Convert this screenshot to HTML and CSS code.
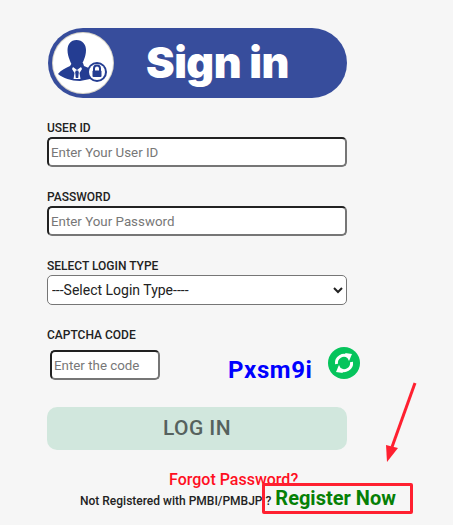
FILE: index.html
```html
<!DOCTYPE html>
<html lang="en">
<head>
<meta charset="utf-8">
<title>Sign in</title>
<link rel="stylesheet" href="styles.css">
</head>
<body>
<main class="page">
  <div class="banner">
    <div class="avatar">
      <svg viewBox="0 0 60 60" width="60" height="60" aria-hidden="true">
        <path class="navy" d="M5 41C8 37 13 35 17 33L19 30L30 30L31 33L38 36L37 46L27 48C18 48 10 45 5 41Z"/>
        <path class="navy" d="M23.500 7C17.500 7 14.500 11.500 14.500 17C14.500 21 15.500 24 16.500 26.500C17.500 30 20 34 23.500 34C27 34 30 30 31 26.500C32 24 33 21 33 17C33 11.500 29.500 7 23.500 7Z"/>
        <path class="white" d="M20 34L24 37L28 34L29 36L26.500 40L27.500 46L20.500 46L21.500 40L19 36Z"/>
        <path class="navy" d="M22.800 37.500H25.200L25.800 39.500L25.200 45H22.800L22.200 39.500Z"/>
        <circle class="navy" cx="44" cy="39" r="10"/>
        <circle class="white" cx="44" cy="39" r="8"/>
        <path class="lock" d="M41 38V35.500A3 3 0 0 1 47 35.500V38"/>
        <rect class="navy" x="39.500" y="37.500" width="9" height="6.500" rx="1"/>
      </svg>
    </div>
    <span class="banner-title">Sign in</span>
  </div>

  <form class="form">
    <div class="field">
      <label class="label" for="uid">USER ID</label>
      <input class="input" id="uid" type="text" placeholder="Enter Your User ID">
    </div>
    <div class="field">
      <label class="label" for="pwd">PASSWORD</label>
      <input class="input" id="pwd" type="password" placeholder="Enter Your Password">
    </div>
    <div class="field">
      <label class="label" for="type">SELECT LOGIN TYPE</label>
      <select class="select" id="type"><option>---Select Login Type----</option></select>
    </div>
    <div class="field">
      <label class="label" for="cap">CAPTCHA CODE</label>
      <div class="captcha-row">
        <input class="input captcha-input" id="cap" type="text" placeholder="Enter the code">
        <span class="captcha-code">Pxsm9i</span>
        <span class="refresh">
          <svg viewBox="0 0 32 32" width="32" height="32" aria-hidden="true">
            <circle cx="16" cy="16" r="16" fill="#06c45c"/>
            <path class="arc" d="M8.500 17a7.500 7.500 0 0 1 12-7"/>
            <path class="tip" d="M17 6l7 1-3 7z"/>
            <path class="arc" d="M23.500 15a7.500 7.500 0 0 1-12 7"/>
            <path class="tip" d="M15 26l-7-1 3-7z"/>
          </svg>
        </span>
      </div>
    </div>
    <button class="login" type="button">LOG IN</button>
    <a class="forgot" href="#">Forgot Password?</a>
    <p class="register">Not Registered with PMBI/PMBJP ? <a class="register-link" href="#">Register Now</a></p>
  </form>

  <span class="red-box"></span>
  <svg class="arrow" viewBox="0 0 40 90" width="40" height="90" aria-hidden="true">
    <path d="M31 3L8 67" stroke="#ff2030" stroke-width="3" fill="none"/>
    <path d="M3 82L2 65L14 68Z" fill="#ff2030"/>
  </svg>
</main>
</body>
</html>
```
FILE: styles.css
```css
* { box-sizing: border-box; }
html, body { margin: 0; height: 100%; }
body {
  background: #f6f6f6;
  font-family: Roboto, "Liberation Sans", sans-serif;
  overflow: hidden;
}
.page {
  position: relative;
  width: 453px;
  height: 525px;
  padding: 28px 0 0 47px;
}
.banner {
  display: flex;
  align-items: center;
  width: 299px;
  height: 70px;
  margin-left: 1px;
  border-radius: 35px;
  background: #374d9c;
}
.avatar {
  width: 60px;
  height: 60px;
  margin-left: 5px;
  border-radius: 50%;
  background: #fff;
  box-shadow: 0 0 0 1px #d8d4c8;
  overflow: hidden;
  flex: none;
}
.navy { fill: #243d92; }
.white { fill: #fff; }
.lock { fill: none; stroke: #243d92; stroke-width: 2; }
.banner-title {
  margin-left: 33px;
  margin-top: -3px;
  font-family: Inter, Roboto, sans-serif;
  font-size: 43px;
  font-weight: 900;
  letter-spacing: -0.5px;
  color: #fff;
  white-space: nowrap;
}
.form {
  display: flex;
  flex-direction: column;
  width: 300px;
  margin-top: 23px;
}
.field {
  display: flex;
  flex-direction: column;
  margin-bottom: 23px;
}
.label {
  height: 16px;
  font-size: 12px;
  font-weight: 500;
  line-height: 14px;
  color: #222;
}
.input {
  width: 100%;
  height: 30px;
  padding: 0 2px;
  border: 2px solid;
  border-color: #222 #767676 #767676 #222;
  border-radius: 5px;
  background: #fff;
  font-family: Roboto, sans-serif;
  font-size: 13.333px;
  outline: none;
}
.input::placeholder { color: #777; opacity: 1; }
.select {
  width: 100%;
  height: 30px;
  padding: 0;
  border: 1px solid #767676;
  border-radius: 5px;
  background: #fff;
  font-family: Roboto, sans-serif;
  font-size: 14px;
  color: #222;
}
.captcha-row {
  display: flex;
  align-items: flex-start;
  height: 40px;
  padding-left: 3px;
}
.captcha-input {
  width: 110px;
  margin-top: 6px;
  flex: none;
}
.captcha-code {
  margin-left: 68px;
  margin-top: 8px;
  font-size: 24px;
  font-weight: 700;
  letter-spacing: 0.6px;
  line-height: 36px;
  color: #0000ff;
}
.refresh {
  display: block;
  width: 32px;
  height: 32px;
  margin-left: 15px;
  margin-top: 3px;
}
.arc { fill: none; stroke: #fff; stroke-width: 3; }
.tip { fill: #fff; }
.login {
  width: 300px;
  height: 43px;
  padding: 0 0 2px;
  border: 0;
  border-radius: 10px;
  background: #d1e7dd;
  font-family: Roboto, sans-serif;
  font-size: 21px;
  font-weight: 500;
  letter-spacing: 0.4px;
  color: #56625e;
}
.forgot {
  margin-top: 20px;
  padding-left: 122px;
  font-size: 16px;
  font-weight: 500;
  line-height: 19px;
  color: #ff0f1f;
  text-decoration: none;
  white-space: nowrap;
}
.register {
  margin: -1px 0 0 33px;
  font-size: 12px;
  font-weight: 500;
  line-height: 20px;
  color: #222;
  white-space: nowrap;
}
.register-link {
  margin-left: 1px;
  font-size: 20px;
  font-weight: 700;
  color: #068006;
  text-decoration: none;
}
.red-box {
  position: absolute;
  left: 262px;
  top: 483px;
  width: 151px;
  height: 31px;
  border: 3px solid #ff2030;
  border-radius: 2px;
}
.arrow {
  position: absolute;
  left: 384px;
  top: 380px;
}
```
